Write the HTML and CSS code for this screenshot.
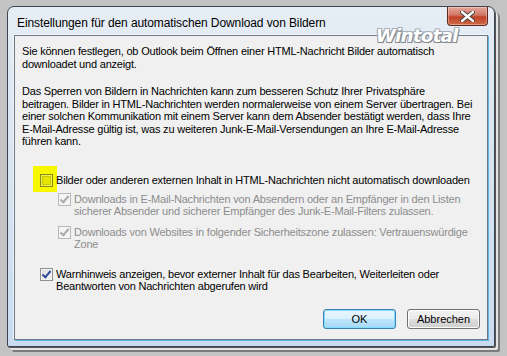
FILE: index.html
```html
<!DOCTYPE html>
<html>
<head>
    <meta charset="UTF-8">
    <title>Einstellungen für den automatischen Download von Bildern</title>
    <link rel="stylesheet" href="styles.css">
</head>
<body>
    <div class="shot">
        <div class="window">
            <div class="titlebar">
                <span class="title">Einstellungen für den automatischen Download von Bildern</span>
                <button class="close" aria-label="Schließen">
                    <svg width="15" height="11" viewBox="0 0 15 11">
                        <path d="M2 1 L13 10 M13 1 L2 10" stroke="#3a3a3a" stroke-width="4.2" stroke-linecap="round"/>
                        <path d="M2 1 L13 10 M13 1 L2 10" stroke="#ffffff" stroke-width="2.4" stroke-linecap="round"/>
                    </svg>
                </button>
            </div>
            <div class="watermark">Wintotal</div>

            <div class="panel">
                <p class="text">Sie können festlegen, ob Outlook beim Öffnen einer HTML-Nachricht Bilder automatisch<br>downloadet und anzeigt.</p>
                <p class="text second">Das Sperren von Bildern in Nachrichten kann zum besseren Schutz Ihrer Privatsphäre<br>beitragen. Bilder in HTML-Nachrichten werden normalerweise von einem Server übertragen. Bei<br>einer solchen Kommunikation mit einem Server kann dem Absender bestätigt werden, dass Ihre<br>E-Mail-Adresse gültig ist, was zu weiteren Junk-E-Mail-Versendungen an Ihre E-Mail-Adresse<br>führen kann.</p>

                <div class="options">
                    <div class="check block">
                        <span class="box marked"></span>
                        <span>Bilder oder anderen externen Inhalt in HTML-Nachrichten nicht automatisch downloaden</span>
                    </div>
                    <div class="check sub disabled">
                        <span class="box checked"></span>
                        <span>Downloads in E-Mail-Nachrichten von Absendern oder an Empfänger in den Listen<br>sicherer Absender und sicherer Empfänger des Junk-E-Mail-Filters zulassen.</span>
                    </div>
                    <div class="check sub disabled second-sub">
                        <span class="box checked"></span>
                        <span>Downloads von Websites in folgender Sicherheitszone zulassen: Vertrauenswürdige<br>Zone</span>
                    </div>
                    <div class="check warn">
                        <span class="box checked"></span>
                        <span>Warnhinweis anzeigen, bevor externer Inhalt für das Bearbeiten, Weiterleiten oder<br>Beantworten von Nachrichten abgerufen wird</span>
                    </div>
                </div>

                <div class="buttons">
                    <button class="btn default">OK</button>
                    <button class="btn">Abbrechen</button>
                </div>
            </div>
        </div>
    </div>
</body>
</html>
```

FILE: styles.css
```css
/* Global */
* {
    margin: 0;
    padding: 0;
    box-sizing: border-box;
}

body {
    width: 507px;
    height: 356px;
    background: #c3c3c3;
    font-family: "Liberation Sans", Arial, sans-serif;
    font-size: 11px;
    letter-spacing: -0.2px;
    color: #000;
    overflow: hidden;
}

/* Screenshot frame */
.shot {
    width: 507px;
    height: 356px;
    padding: 6px 12px 9px 7px;
    position: relative;
}

/* Window glass */
.window {
    position: relative;
    width: 488px;
    height: 341px;
    border: 1px solid #3b4652;
    border-radius: 7px 7px 2px 2px;
    background: linear-gradient(to bottom, #e6edf5 0%, #d9e5f1 40%, #c9dcef 100%);
    box-shadow: 1px 1px 0 #555, 3px 3px 0 #e4e4e4, 5px 5px 0 #7c7c7c;
    padding: 0 6px 6px 6px;
    display: flex;
    flex-direction: column;
}

.titlebar {
    height: 28px;
    display: flex;
    justify-content: space-between;
    align-items: flex-start;
}

.title {
    font-family: "Liberation Sans", Arial, sans-serif;
    font-size: 12px;
    letter-spacing: -0.1px;
    margin: 9px 0 0 3px;
    color: #000;
}

.close {
    width: 41px;
    height: 19px;
    border: 1px solid #5b2a22;
    border-top: none;
    border-radius: 0 0 4px 4px;
    background: linear-gradient(to bottom, #e4a89b 0%, #d27764 45%, #c04128 55%, #cf6a45 100%);
    box-shadow: inset 0 0 0 1px rgba(255, 220, 210, 0.45);
    display: flex;
    align-items: center;
    justify-content: center;
}

.watermark {
    position: absolute;
    left: 368px;
    top: 21px;
    font-family: "DejaVu Sans", sans-serif;
    font-size: 18px;
    line-height: 15px;
    font-weight: bold;
    font-style: italic;
    letter-spacing: -0.6px;
    color: #ffffff;
    text-shadow: 1px 1px 0 #7d838b, -1px -1px 0 #a9b0b8, 1px -1px 0 #a9b0b8, -1px 1px 0 #8f959d;
    z-index: 2;
}

/* Content panel */
.panel {
    flex: 1;
    background: #f0f0f0;
    border: 1px solid #6b7784;
    box-shadow: 1px 1px 0 #5fb6ea, -1px -1px 0 rgba(255, 255, 255, 0.7);
    padding: 9px 7px 0 7px;
    display: flex;
    flex-direction: column;
    line-height: 12.5px;
}

.text {
    white-space: nowrap;
}

.text.second {
    margin-top: 15px;
}

/* Checkboxes */
.options {
    margin-top: 26px;
    display: flex;
    flex-direction: column;
}

.check {
    display: flex;
    align-items: flex-start;
    gap: 3px;
    padding-left: 18px;
    white-space: nowrap;
}

.check.sub {
    padding-left: 36px;
    margin-top: 6px;
}

.check.second-sub {
    margin-top: 8px;
}

.check.warn {
    margin-top: 17px;
}

.check.disabled {
    color: #8d8d8d;
}

.box {
    position: relative;
    flex: none;
    width: 13px;
    height: 13px;
    border: 1px solid #8e8f8f;
    background: linear-gradient(135deg, #dcdcdc 0%, #f6f6f6 100%);
    box-shadow: inset 0 0 0 1px #f4f4f4;
}

.box.marked {
    border-color: #8a8a1c;
    background: #e6e600;
    box-shadow: inset 0 0 0 1px #f2f24a, inset 0 0 0 2px #c8c810;
}

.box.marked::before {
    content: "";
    position: absolute;
    left: -8px;
    top: -9px;
    width: 24px;
    height: 26px;
    background: #f7f700;
    z-index: -1;
}

.block {
    position: relative;
    z-index: 0;
}

.box.checked::after {
    content: "";
    position: absolute;
    left: 3px;
    top: 0px;
    width: 3px;
    height: 7px;
    border-right: 2px solid #2f4c9c;
    border-bottom: 2px solid #2f4c9c;
    transform: rotate(40deg);
}

.disabled .box {
    border-color: #b9b9b9;
    background: #f4f4f4;
    box-shadow: none;
}

.disabled .box.checked::after {
    border-color: #a9a9a9;
}

/* Buttons */
.buttons {
    margin-top: auto;
    margin-bottom: 10px;
    display: flex;
    justify-content: flex-end;
    gap: 11px;
}

.btn {
    width: 73px;
    height: 20px;
    font-family: "Liberation Sans", Arial, sans-serif;
    font-size: 11px;
    color: #000;
    border: 1px solid #707070;
    border-radius: 3px;
    background: linear-gradient(to bottom, #f2f2f2 0%, #ebebeb 48%, #dddddd 52%, #cfcfcf 100%);
    box-shadow: inset 0 0 0 1px #fcfcfc;
}

.btn.default {
    border-color: #3c7fb1;
    background: linear-gradient(to bottom, #eaf6fd 0%, #d9f0fc 48%, #bee6fd 52%, #a7d9f5 100%);
    box-shadow: inset 0 0 0 1px #7ddcff;
}
```
